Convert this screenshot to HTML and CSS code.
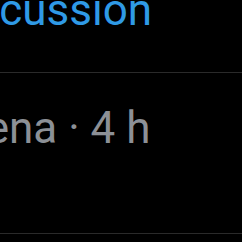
FILE: index.html
```html
<!DOCTYPE html>
<html lang="en">
<head>
    <meta charset="UTF-8">
    <meta name="viewport" content="width=device-width, initial-scale=1.0">
    <title>Discussion</title>
    <link rel="stylesheet" href="styles.css">
</head>
<body>
    <div class="screen">
        <header class="topbar">
            <h1 class="title">Discussion</h1>
        </header>

        <div class="thread">
            <div class="meta">Elena · 4 h</div>
        </div>
    </div>
</body>
</html>
```

FILE: styles.css
```css
:root {
    --bg: #000000;
    --accent: #2f9ae6;
    --muted: #8c9096;
    --divider: #2a2a2a;
}

* {
    margin: 0;
    padding: 0;
    box-sizing: border-box;
}

body {
    background-color: var(--bg);
    font-family: Roboto, 'Liberation Sans', sans-serif;
    width: 242px;
    height: 242px;
    overflow: hidden;
}

.screen {
    width: 242px;
    overflow: hidden;
}

.topbar {
    display: flex;
    align-items: flex-start;
    height: 73px;
    border-bottom: 1px solid var(--divider);
}

.title {
    margin-left: -63px;
    margin-top: -16px;
    font-size: 44px;
    font-weight: 400;
    line-height: 52px;
    color: var(--accent);
    white-space: nowrap;
}

.thread {
    display: flex;
    align-items: flex-start;
    height: 161px;
    border-bottom: 1px solid var(--divider);
}

.meta {
    margin-left: -50px;
    margin-top: 29px;
    font-size: 44px;
    line-height: 52px;
    color: var(--muted);
    white-space: nowrap;
}
```
